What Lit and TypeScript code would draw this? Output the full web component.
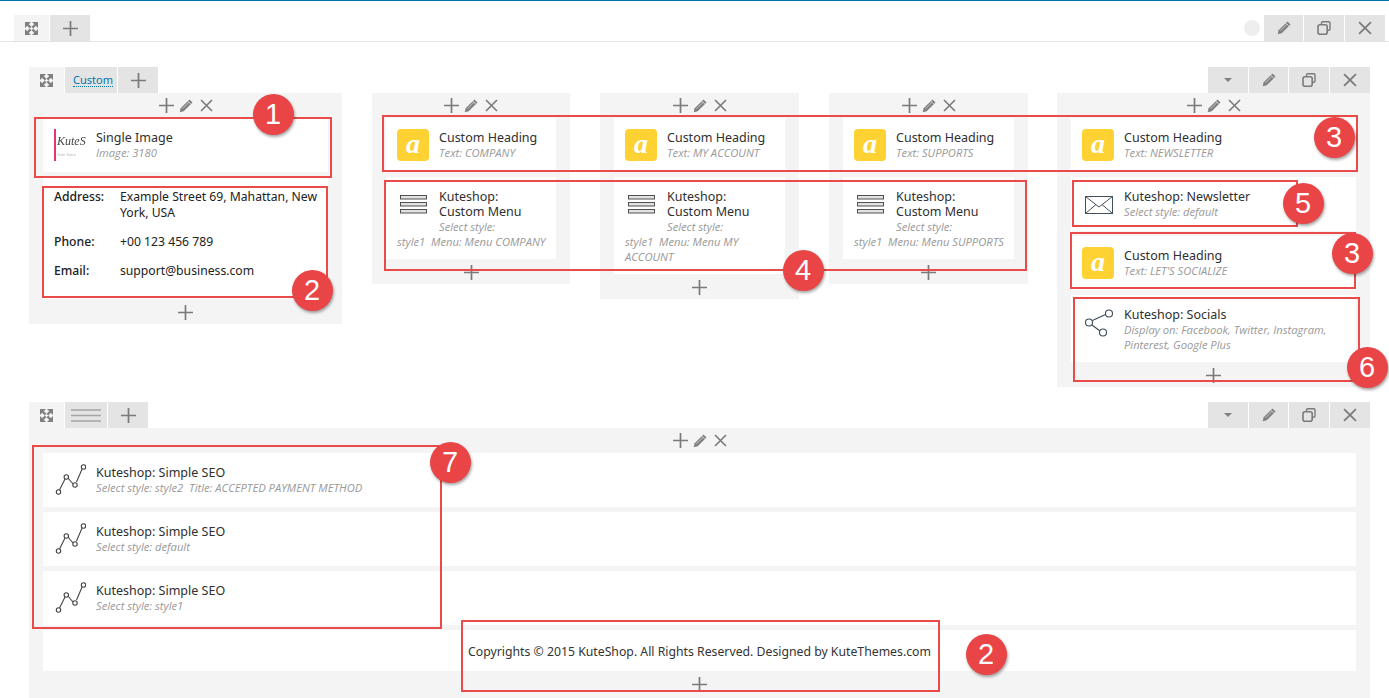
import { LitElement, html, css, svg } from "lit";
import { customElement } from "lit/decorators.js";

const plus = (s = 15) => html`<svg class="ic" width=${s} height=${s} viewBox="0 0 15 15"><path d="M7.5 0v15M0 7.500h15" stroke="#7a7a7a" stroke-width="1.7" fill="none"/></svg>`;
const cross = (s = 13) => html`<svg class="ic" width=${s} height=${s} viewBox="0 0 13 13"><path d="M1 1l11 11M12 1L1 12" stroke="#7a7a7a" stroke-width="1.6" fill="none"/></svg>`;
const pencil = (s = 14) => html`<svg class="ic" width=${s} height=${s} viewBox="0 0 14 14"><path d="M10.500.5l3 3-8.800 8.800L.7 13.300l1-4z" fill="#7f7f7f"/><path d="M3.500 9.800l6.800-6.800" stroke="#cfcfcf" stroke-width=".9"/><path d="M8.900 2.100l3 3" stroke="#eee" stroke-width=".7"/></svg>`;
const copy = () => html`<svg class="ic" width="14" height="14" viewBox="0 0 14 14"><path d="M4.500 3.500V2a1.200 1.200 0 0 1 1.200-1.200h6A1.200 1.200 0 0 1 13 2v6a1.200 1.200 0 0 1-1.200 1.200h-1.500" fill="none" stroke="#7a7a7a" stroke-width="1.4"/><rect x="1" y="3.800" width="9.200" height="9.400" rx="2" fill="none" stroke="#7a7a7a" stroke-width="1.6"/></svg>`;
const caret = () => html`<svg class="ic" width="8" height="4" viewBox="0 0 8 4"><path d="M0 0h8L4 4z" fill="#808080"/></svg>`;
const expand = () => html`<svg class="ic" width="13" height="13" viewBox="0 0 13 13"><g fill="#808080"><path d="M0 0h6L0 6z"/><path d="M13 0v6L7 0z"/><path d="M0 13V7l6 6z"/><path d="M13 13H7l6-6z"/></g><path d="M2 2l3.600 3.600M11 2L7.400 5.600M2 11l3.600-3.600M11 11L7.400 7.400" stroke="#808080" stroke-width="2.400"/></svg>`;
const rows = () => html`<svg class="ic" width="30" height="13" viewBox="0 0 30 13"><path d="M0 1h30M0 6.500h30M0 12h30" stroke="#a4a4a4" stroke-width="1.700"/></svg>`;

const seoIcon = svg`<path d="M5.500 26L11 15M14 14l5 6M22.500 18l6-14" stroke="#444" stroke-width="1.100" fill="none"/><g fill="#fff" stroke="#444" stroke-width="1.100"><circle cx="4.500" cy="28" r="2.200"/><circle cx="12.300" cy="13" r="2.200"/><circle cx="21" cy="21" r="2.200"/><circle cx="29.500" cy="3" r="2.200"/></g>`;
const menuIcon = svg`<g fill="#e2e2e2" stroke="#505050" stroke-width="1"><rect x="3.500" y="7.500" width="26" height="3.500"/><rect x="3.500" y="14.500" width="26" height="3.500"/><rect x="3.500" y="21.500" width="26" height="3.500"/></g>`;
const mailIcon = svg`<g fill="none" stroke="#40505f" stroke-width="1"><rect x="3.500" y="8.500" width="27" height="17"/><path d="M3.500 8.500L17 19l13.500-10.500M3.500 25.500l10.500-9M30.500 25.500l-10.500-9"/></g>`;
const shareIcon = svg`<path d="M10.500 14.500l13-6M10 19l8 6" stroke="#3c4a58" stroke-width="1.100" fill="none"/><g fill="#fff" stroke="#3c4a58" stroke-width="1.100"><circle cx="27" cy="7.500" r="3.500"/><circle cx="7" cy="16.500" r="3.500"/><circle cx="21" cy="26.500" r="3.500"/></g>`;

type Kind = "heading" | "menu" | "mail" | "share" | "seo" | "image";
interface Card { kind: Kind; title: string; sub: string }

const head = (t: string): Card => ({ kind: "heading", title: "Custom Heading", sub: `Text: ${t}` });
const menu = (t: string): Card => ({ kind: "menu", title: "Kuteshop: Custom Menu", sub: `Select style: style1\u00a0\u00a0Menu: Menu ${t}` });
const seo = (t: string): Card => ({ kind: "seo", title: "Kuteshop: Simple SEO", sub: t });

const boxes = [
  [34, 117, 298, 61], [42, 186, 286, 112], [382, 115, 976, 57], [384, 180, 643, 91],
  [1072, 180, 226, 47], [1070, 232, 286, 57], [1073, 297, 287, 85], [32, 445, 410, 184], [461, 620, 479, 72],
];
const marks = [
  [273, 114, "1"], [312, 290, "2"], [1334, 137, "3"], [803, 270, "4"], [1303, 203, "5"],
  [1352, 253, "3"], [1367, 367, "6"], [450, 462, "7"], [986, 654, "2"],
] as const;

@customElement("app-root")
export class AppRoot extends LitElement {
  static styles = css`
    :host { display: block; position: relative; width: 1389px; height: 698px; overflow: hidden; background: #fff;
      font-family: "Noto Sans", sans-serif; font-size: 13px; color: #333; }
    .ic { display: block; flex: none; }
    .topline { height: 1px; background: #0073aa; }
    .topbar { display: flex; justify-content: space-between; margin-top: 14px; padding: 0 4px 0 14px; border-bottom: 1px solid #e3e3e3; }
    .rowbar { display: flex; justify-content: space-between; }
    .tabs { display: flex; gap: 1px; align-items: stretch; }
    .tab { height: 26px; width: 40px; background: #e4e4e4; display: flex; align-items: center; justify-content: center; }
    .tab.on { background: #f4f4f4; width: 35px; }
    .tab.nar { width: 39px; }
    .tab.label { width: 52px; box-sizing: border-box; padding-left: 4px; }
    .tab.lines { width: 42px; }
    .tab a { font-size: 11px; color: #0073aa; border-bottom: 1px dotted #0073aa; line-height: 13px; }
    .dot { width: 16px; height: 16px; border-radius: 50%; background: #eee; align-self: center; margin-right: 3px; }
    .row { margin: 0 19px 0 29px; }
    .row.first { margin-top: 25px; }
    .row.second { margin-top: 15px; }
    .cols { display: flex; gap: 30px; align-items: flex-start; }
    .col { background: #f4f4f4; width: 199px; }
    .col.narrow { width: 198px; }
    .col.wide { width: 313px; }
    .col.last { margin-left: -1px; }
    .acts { height: 25px; display: flex; gap: 5px; align-items: center; justify-content: center; }
    .acts .ic:nth-child(2) { margin-right: 2px; }
    .foot { height: 25px; box-sizing: border-box; padding-top: 2px; display: flex; align-items: center; justify-content: center; }
    .stack { display: flex; flex-direction: column; gap: 5px; padding: 0 14px; }
    .card { display: flow-root; background: #fff; padding: 12px 8px 10px 11px; line-height: 15px; }
    .icon { float: left; width: 32px; height: 32px; margin: -1px 10px 1px 0; }
    .badge { background: #ffd233; border-radius: 4px; color: #fff; font: italic bold 28px/30px "Liberation Serif", serif; text-align: center; }
    .title { font-size: 12.5px; color: #2f2f2f; padding-right: 6px; }
    .sub { font-size: 11.2px; font-style: italic; color: #999; font-family: "Open Sans", sans-serif; }
    .logo { box-sizing: border-box; padding-left: 1px; border-left: 2px solid #e8336b; color: #444; font: italic 12px/24px "Liberation Serif", serif; white-space: nowrap; filter: blur(.3px); }
    .logo small { display: block; font: 4px/4px "Liberation Sans", sans-serif; color: #bbb; }
    .info { background: #fff; padding: 12px 4px 19px 11px; height: 91px; font-size: 12.2px; line-height: 16px; }
    .info .line { display: grid; grid-template-columns: 66px 1fr; margin-bottom: 13px; color: #222; }
    .info b { font-weight: 500; }
    .copy { background: #fff; height: 41px; box-sizing: border-box; padding-top: 2px; display: flex; align-items: center; justify-content: center; font-size: 12.26px; color: #333; }
    .body { background: #f4f4f4; height: 270px; }
    .box { position: absolute; box-sizing: border-box; border: 2px solid #e94b49; pointer-events: none; }
    .mark { position: absolute; width: 41px; height: 41px; margin: -20.5px 0 0 -20.5px; border-radius: 50%; background: #e94547;
      color: #fff; font: 29px/41px "Liberation Sans", sans-serif; text-align: center; box-shadow: 1px 2px 3px rgba(0,0,0,.35); }
  `;

  private renderIcon(k: Kind) {
    if (k === "heading") return html`<div class="icon badge">a</div>`;
    if (k === "image") return html`<div class="icon logo">KuteS<small>Safe Store</small></div>`;
    const g = k === "menu" ? menuIcon : k === "mail" ? mailIcon : k === "share" ? shareIcon : seoIcon;
    return html`<svg class="icon" viewBox="0 0 32 32">${g}</svg>`;
  }

  private card(c: Card) {
    return html`<div class="card">${this.renderIcon(c.kind)}<div class="title">${c.title}</div><div class="sub">${c.sub}</div></div>`;
  }

  private acts() {
    return html`<div class="acts">${plus()}${pencil()}${cross()}</div>`;
  }

  private col(cards: Card[], cls = "") {
    return html`<div class="col ${cls}">${this.acts()}<div class="stack">${cards.map((c) => this.card(c))}</div><div class="foot">${plus()}</div></div>`;
  }

  private rightTools() {
    return html`<div class="tabs"><div class="tab">${caret()}</div><div class="tab nar">${pencil()}</div><div class="tab">${copy()}</div><div class="tab">${cross(14)}</div></div>`;
  }

  render() {
    return html`
      <div class="topline"></div>
      <div class="topbar">
        <div class="tabs"><div class="tab on">${expand()}</div><div class="tab">${plus()}</div></div>
        <div class="tabs"><div class="dot"></div><div class="tab nar">${pencil()}</div><div class="tab">${copy()}</div><div class="tab">${cross(14)}</div></div>
      </div>

      <section class="row first">
        <div class="rowbar">
          <div class="tabs"><div class="tab on">${expand()}</div><div class="tab label"><a>Custom</a></div><div class="tab">${plus()}</div></div>
          ${this.rightTools()}
        </div>
        <div class="cols">
          <div class="col wide">
            ${this.acts()}
            <div class="stack">
              ${this.card({ kind: "image", title: "Single Image", sub: "Image: 3180" })}
              <div class="info">
                <div class="line"><b>Address:</b><span>Example Street 69, Mahattan, New York, USA</span></div>
                <div class="line"><b>Phone:</b><span>+00 123 456 789</span></div>
                <div class="line"><b>Email:</b><span>support@business.com</span></div>
              </div>
            </div>
            <div class="foot">${plus()}</div>
          </div>
          ${this.col([head("COMPANY"), menu("COMPANY")], "narrow")}
          ${this.col([head("MY ACCOUNT"), menu("MY ACCOUNT")])}
          ${this.col([head("SUPPORTS"), menu("SUPPORTS")])}
          ${this.col([
            head("NEWSLETTER"),
            { kind: "mail", title: "Kuteshop: Newsletter", sub: "Select style: default" },
            head("LET'S SOCIALIZE"),
            { kind: "share", title: "Kuteshop: Socials", sub: "Display on: Facebook, Twitter, Instagram, Pinterest, Google Plus" },
          ], "wide last")}
        </div>
      </section>

      <section class="row second">
        <div class="rowbar">
          <div class="tabs"><div class="tab on">${expand()}</div><div class="tab lines">${rows()}</div><div class="tab">${plus()}</div></div>
          ${this.rightTools()}
        </div>
        <div class="body">
          ${this.acts()}
          <div class="stack">
            ${this.card(seo("Select style: style2\u00a0\u00a0Title: ACCEPTED PAYMENT METHOD"))}
            ${this.card(seo("Select style: default"))}
            ${this.card(seo("Select style: style1"))}
            <div class="copy">Copyrights © 2015 KuteShop. All Rights Reserved. Designed by KuteThemes.com</div>
          </div>
          <div class="foot">${plus()}</div>
        </div>
      </section>

      ${boxes.map(([x, y, w, h]) => html`<div class="box" style="left:${x}px;top:${y}px;width:${w}px;height:${h}px"></div>`)}
      ${marks.map(([x, y, n]) => html`<div class="mark" style="left:${x}px;top:${y}px">${n}</div>`)}
    `;
  }
}
